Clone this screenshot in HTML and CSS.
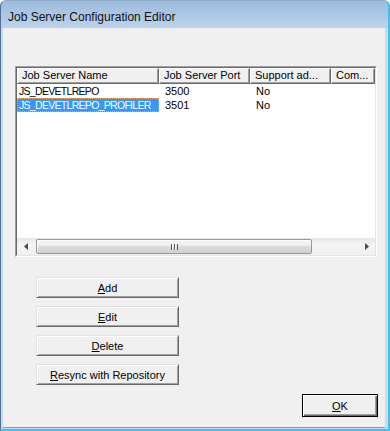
FILE: index.html
```html
<!DOCTYPE html>
<html>
<head>
<title>Job Server Configuration Editor</title>
<meta name="viewport" content="width=device-width, initial-scale=1.0">
<link rel="stylesheet" href="styles.css">
</head>
<body>
    <div class="window">
        <div class="titlebar">Job Server Configuration Editor</div>

        <div class="client">
            <!-- danh sach job server -->
            <div class="listview">
                <div class="listview-inner">
                    <div class="list-header">
                        <div class="hcell col-name">Job Server Name</div>
                        <div class="hcell col-port">Job Server Port</div>
                        <div class="hcell col-support">Support ad...</div>
                        <div class="hcell col-com">Com...</div>
                    </div>

                    <div class="list-row">
                        <div class="cell col-name"><span class="item-text">JS_DEVETLREPO</span></div>
                        <div class="cell col-port">3500</div>
                        <div class="cell col-support">No</div>
                        <div class="cell col-com"></div>
                    </div>
                    <div class="list-row">
                        <div class="cell col-name"><span class="item-text selected">JS_DEVETLREPO_PROFILER</span></div>
                        <div class="cell col-port">3501</div>
                        <div class="cell col-support">No</div>
                        <div class="cell col-com"></div>
                    </div>

                    <div class="list-empty"></div>

                    <div class="hscroll">
                        <div class="sb-btn">
                            <svg width="4" height="7" viewBox="0 0 4 7"><path d="M4 0 L0 3.5 L4 7 Z" fill="#4a4a4a"/></svg>
                        </div>
                        <div class="sb-track">
                            <div class="sb-thumb">
                                <svg width="7" height="6" viewBox="0 0 7 6">
                                    <rect x="0" y="0" width="1" height="6" fill="#5a5a5a"/>
                                    <rect x="3" y="0" width="1" height="6" fill="#5a5a5a"/>
                                    <rect x="6" y="0" width="1" height="6" fill="#5a5a5a"/>
                                    <rect x="1" y="0" width="1" height="6" fill="#fafafa"/>
                                    <rect x="4" y="0" width="1" height="6" fill="#fafafa"/>
                                </svg>
                            </div>
                        </div>
                        <div class="sb-btn">
                            <svg width="4" height="7" viewBox="0 0 4 7"><path d="M0 0 L4 3.5 L0 7 Z" fill="#4a4a4a"/></svg>
                        </div>
                    </div>
                </div>
            </div>

            <div class="actions">
                <button class="btn"><u>A</u>dd</button>
                <button class="btn"><u>E</u>dit</button>
                <button class="btn"><u>D</u>elete</button>
                <button class="btn"><u>R</u>esync with Repository</button>
            </div>

            <div class="footer">
                <button class="btn btn-default"><u>O</u>K</button>
            </div>
        </div>
    </div>
</body>
</html>
```

FILE: styles.css
```css
/* Cua so hop thoai kieu Windows */
body {
    margin: 0;
    width: 390px;
    height: 431px;
    overflow: hidden;
    background-color: #ffffff;
    font-family: "Liberation Sans", Arial, sans-serif;
    font-size: 11px;
    color: #000;
}

.window {
    width: 390px;
    height: 431px;
    box-sizing: border-box;
    display: flex;
    flex-direction: column;
    border-top: 1px solid #8eaacb;
    border-left: 1px solid #4f6f93;
    border-right: 2px solid #3fc3ee;
    border-bottom: 2px solid #3fc3ee;
    border-top-left-radius: 6px;
    border-top-right-radius: 6px;
    padding: 0 3px 1px 2px;
    background: linear-gradient(#9dbbdc, #bdd4ed) top / 100% 28px no-repeat, #c9dbee;
}

.titlebar {
    height: 27px;
    box-sizing: border-box;
    padding: 5px 0 0 5px;
    line-height: 22px;
    font-size: 12px;
    color: #111;
    white-space: nowrap;
}

.client {
    flex: 1;
    display: flex;
    flex-direction: column;
    background-color: #f0f0f0;
    border-bottom: 1px solid #8b9aa9;
    padding: 38px 0 0 12px;
}

/* List view */
.listview {
    width: 362px;
    height: 191px;
    box-sizing: border-box;
    border: 1px solid;
    border-color: #a0a0a0 #ffffff #ffffff #a0a0a0;
}

.listview-inner {
    height: 100%;
    box-sizing: border-box;
    border: 1px solid;
    border-color: #696969 #e3e3e3 #e3e3e3 #696969;
    background-color: #ffffff;
    display: flex;
    flex-direction: column;
}

.list-header {
    display: flex;
    height: 16px;
}

.hcell {
    box-sizing: border-box;
    height: 16px;
    line-height: 13px;
    padding-left: 4px;
    background-color: #f0f0f0;
    border: 1px solid;
    border-color: #ffffff #696969 #696969 #ffffff;
    box-shadow: inset -1px -1px #a0a0a0;
    white-space: nowrap;
    overflow: hidden;
}

.col-name { width: 142px; }
.col-port { width: 91px; }
.col-support { width: 81px; }
.col-com { width: 44px; }

.list-row {
    display: flex;
    height: 14px;
    line-height: 14px;
}

.cell {
    box-sizing: border-box;
    padding-left: 6px;
    white-space: nowrap;
}

.cell.col-name {
    padding-left: 0;
}

/* chu in hoa cua Tahoma hep hon, nen thu nho lai mot chut */
.item-text {
    display: block;
    height: 14px;
    box-sizing: border-box;
    padding-left: 2px;
    line-height: 14px;
    font-size: 10.5px;
    letter-spacing: -0.7px;
}

.item-text.selected {
    background-color: #3399ff;
    color: #ffffff;
    border: 1px dotted #f0a060;
    padding-left: 1px;
    line-height: 12px;
}

.list-empty {
    flex: 1;
}

/* Thanh cuon ngang */
.hscroll {
    display: flex;
    height: 17px;
    background: linear-gradient(#e6e6e6, #f4f4f4 40%, #f0f0f0);
}

.sb-btn {
    width: 17px;
    display: flex;
    align-items: center;
    justify-content: center;
}

.sb-track {
    flex: 1;
    display: flex;
    padding: 1px 0;
}

.sb-thumb {
    width: 276px;
    margin-left: 2px;
    box-sizing: border-box;
    border: 1px solid #979797;
    border-radius: 2px;
    background: linear-gradient(#f5f5f5, #ececec 50%, #dcdcdc 50%, #cfcfcf);
    box-shadow: inset 1px 1px #fdfdfd;
    display: flex;
    align-items: center;
    justify-content: center;
}

/* Nut bam */
.btn {
    font-family: "Liberation Sans", Arial, sans-serif;
    font-size: 11px;
    color: #000;
    background-color: #f0f0f0;
    box-sizing: border-box;
    border: 1px solid;
    border-color: #e3e3e3 #696969 #696969 #e3e3e3;
    box-shadow: inset 1px 1px #ffffff, inset -1px -1px #a0a0a0;
    padding: 0;
    margin: 0;
    border-radius: 0;
}

.actions {
    display: flex;
    flex-direction: column;
    gap: 8px;
    margin: 20px 0 0 21px;
}

.actions .btn {
    width: 143px;
    height: 21px;
}

.footer {
    display: flex;
    justify-content: flex-end;
    padding: 9px 7px 0 0;
}

.btn-default {
    width: 76px;
    height: 23px;
    border: 1px solid #000;
    box-shadow: inset 1px 1px #ffffff, inset -1px -1px #696969, inset -2px -2px #a0a0a0;
}
```
